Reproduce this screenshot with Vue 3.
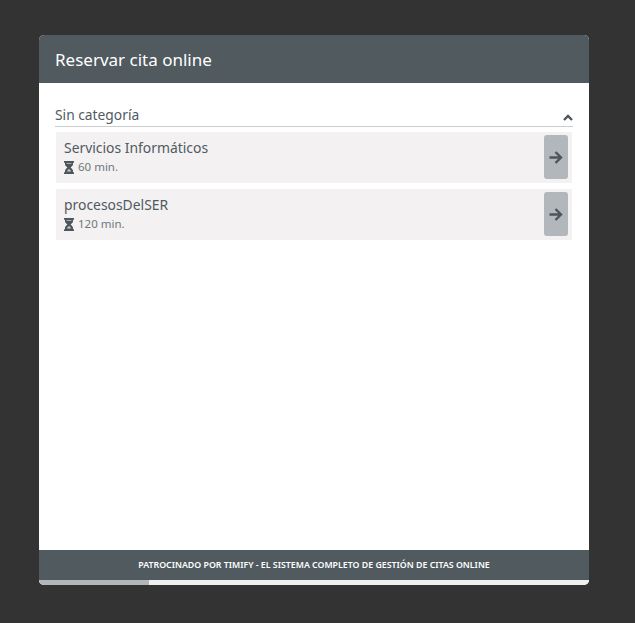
<template>
  <div class="page">
    <div class="widget">
      <header class="head">Reservar cita online</header>
      <main class="body">
        <div class="category">
          <span>Sin categoría</span>
          <svg class="chevron" width="10" height="7" viewBox="0 0 10 7">
            <path d="M1 6 L5 2 L9 6" fill="none" stroke="#4c565b" stroke-width="2.4" />
          </svg>
        </div>
        <div class="services">
          <div v-for="s in services" :key="s.name" class="service">
            <div class="info">
              <div class="name">{{ s.name }}</div>
              <div class="duration">
                <svg width="10" height="13" viewBox="0 0 10 13">
                  <path d="M0 0H10V1.8H9V3.2C9 5 7 5.7 6.6 6.5C7 7.3 9 8 9 9.8V11.2H10V13H0V11.2H1V9.8C1 8 3 7.3 3.4 6.5C3 5.7 1 5 1 3.2V1.8H0Z" fill="#4c565b" />
                  <path d="M2.6 2.2H7.4V3H2.6ZM3.2 9.8C3.8 9 4.4 8.6 5 8.1C5.6 8.6 6.2 9 6.8 9.8V10.4H3.2Z" fill="#c9cccd" />
                </svg>
                <span>{{ s.time }}</span>
              </div>
            </div>
            <button class="go">
              <svg width="14" height="13" viewBox="0 0 14 13">
                <path d="M0.5 6.5H12M6.5 1L12 6.5L6.5 12" fill="none" stroke="#4c565b" stroke-width="2.4" />
              </svg>
            </button>
          </div>
        </div>
      </main>
      <footer class="foot">PATROCINADO POR TIMIFY - EL SISTEMA COMPLETO DE GESTIÓN DE CITAS ONLINE</footer>
      <div class="progress"><div class="bar" :style="{ width: progress + '%' }"></div></div>
    </div>
  </div>
</template>

<script setup>
const progress = 20

const services = [
  { name: 'Servicios Informáticos', time: '60 min.' },
  { name: 'procesosDelSER', time: '120 min.' }
]
</script>

<style>
html, body {
  margin: 0;
  background: #333333;
}
</style>

<style scoped>
.page {
  height: 623px;
  padding: 35px 46px 38px 39px;
  box-sizing: border-box;
  font-family: "Noto Sans", "Open Sans", sans-serif;
}
.widget {
  height: 550px;
  display: flex;
  flex-direction: column;
  background: #fff;
  border-radius: 5px;
  overflow: hidden;
}
.head {
  height: 48px;
  line-height: 50px;
  padding: 0 16px;
  background: #505a5f;
  color: #fff;
  font-size: 17px;
}
.body {
  flex: 1;
  padding: 21px 16px 0;
}
.category {
  display: flex;
  justify-content: space-between;
  align-items: center;
  height: 20px;
  padding-bottom: 2px;
  border-bottom: 1px solid #c9cdcf;
  color: #505a5f;
  font-size: 13.8px;
}
.chevron {
  margin-top: 7px;
}
.services {
  margin-top: 5px;
  padding: 0 1px;
  display: flex;
  flex-direction: column;
  gap: 6px;
}
.service {
  height: 51px;
  display: flex;
  justify-content: space-between;
  align-items: center;
  padding: 0 4px 0 8px;
  background: #f3f1f2;
}
.info {
  margin-top: -2px;
}
.name {
  color: #505a5f;
  font-size: 13.9px;
  line-height: 19px;
}
.duration {
  display: flex;
  align-items: center;
  gap: 4px;
  margin-top: 2px;
  color: #70787c;
  font-size: 11.5px;
  line-height: 16px;
}
.go {
  width: 24px;
  height: 44px;
  margin-top: -1px;
  padding: 0;
  border: none;
  border-radius: 3px;
  background: #b1b7ba;
  display: flex;
  align-items: center;
  justify-content: center;
}
.foot {
  height: 30px;
  line-height: 30px;
  text-align: center;
  background: #505a5f;
  color: #fff;
  font-size: 8.8px;
  font-weight: 600;
}
.progress {
  height: 5px;
  background: #f1f0f0;
}
.bar {
  height: 100%;
  background: #b1b7ba;
}
</style>
